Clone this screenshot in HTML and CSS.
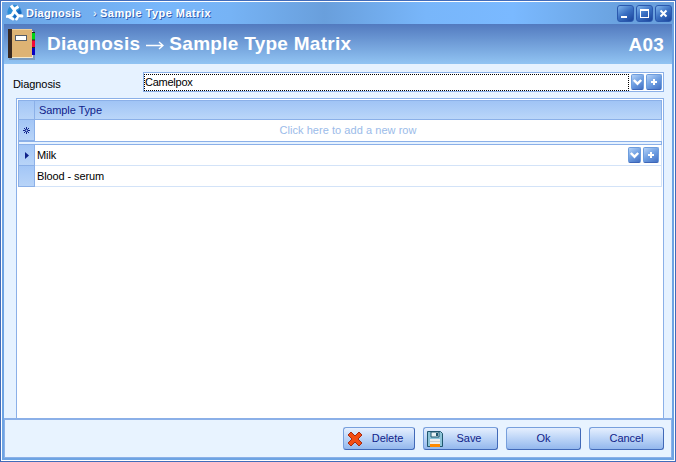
FILE: index.html
```
<!DOCTYPE html>
<html lang="en">
<head>
<meta charset="utf-8">
<title>Diagnosis → Sample Type Matrix</title>
<link rel="stylesheet" href="styles.css">
</head>
<body>
<svg class="defs" width="0" height="0">
  <symbol id="down" viewBox="0 0 11 14"><path d="M1.800 5l3.700 3.700L9.200 5" fill="none" stroke="#fff" stroke-width="2.400"/></symbol>
  <symbol id="plus" viewBox="0 0 14 14"><path d="M4 7h6M7 4v6" fill="none" stroke="#fff" stroke-width="2"/></symbol>
</svg>
<div class="window">
  <div class="frame">
    <div class="titlebar">
      <svg class="app-icon" width="18" height="18" viewBox="0 0 18 18">
        <circle cx="8.500" cy="8" r="7.200" fill="#2e90d8"/>
        <path d="M9 9l5-4 1.500 4-1 3z" fill="#1565bd"/>
        <path d="M5 1.500l3 4 4.500-3M8.500 5v3" fill="none" stroke="#fff" stroke-width="3"/>
        <path d="M8 7.500l-2 3.500-5 1.500M2.500 12.500l4.500 2.500M9 8l3 3.500 4 .5M12 12l-1.500 3" fill="none" stroke="#fff" stroke-width="2.800" stroke-linecap="round"/>
        <path d="M7 12.500l2-2 2 2-2 2z" fill="#1b6cc2"/>
      </svg>
      <span class="title-a">Diagnosis</span><span class="title-sep">›</span><span class="title-b">Sample Type Matrix</span>
      <div class="win-buttons">
        <svg class="win-button" viewBox="0 0 15 15"><path d="M3 10h6v2H3z" fill="#fff"/></svg>
        <svg class="win-button" viewBox="0 0 15 15"><path d="M3 3h9v9H3zM4 5v6h7V5z" fill="#fff" fill-rule="evenodd"/></svg>
        <svg class="win-button" viewBox="0 0 15 15"><path d="M4.500 4.500l6 6M10.500 4.500l-6 6" stroke="#fff" stroke-width="2"/></svg>
      </div>
    </div>
    <div class="banner">
      <svg class="book" width="28" height="31" viewBox="0 0 28 31">
        <rect x="1" y="1" width="26" height="30" fill="#5c6070" opacity=".35"/>
        <path d="M22 2h3v27H22z" fill="#e8e6e0"/>
        <path d="M24 4h3v7h-3z" fill="#00d415"/><path d="M24 11h3v7h-3z" fill="#f20736"/><path d="M24 19h3v7h-3z" fill="#0800c4"/>
        <path d="M24 11h3M24 18.500h3M24 3.500h3" stroke="#222"/>
        <rect x="0" y="0" width="24" height="29" fill="#deb374"/>
        <path d="M4 .5h20" stroke="#f0cf98"/><path d="M4 28.500h20" stroke="#f4e9cc"/>
        <rect x="0" y="0" width="4" height="29" fill="#382820"/>
        <rect x="7.500" y="6.500" width="11" height="5" fill="#fff" stroke="#555c68"/>
      </svg>
      <h1>Diagnosis<svg class="arrow" width="18" height="9" viewBox="0 0 18 9"><path d="M0 4.500h17M13 1l4 3.500L13 8" fill="none" stroke="#fff" stroke-width="1.400"/></svg>Sample Type Matrix</h1>
      <span class="code">A03</span>
    </div>
    <div class="content">
      <div class="field">
        <label>Diagnosis</label>
        <div class="combo">
          <div class="value">Camelpox</div>
          <svg class="mini down"><use href="#down"/></svg><svg class="mini plus"><use href="#plus"/></svg>
        </div>
      </div>
      <div class="grid">
        <div class="row head"><div class="mark"></div><div class="cell">Sample Type</div></div>
        <div class="row new"><div class="mark"><svg width="9" height="9" viewBox="0 0 9 9"><path d="M4.500 1v7M1 4.500h7M2 2l5 5M7 2L2 7" stroke="#10238a"/><circle cx="4.500" cy="4.500" r="1" fill="#a9c9f5"/></svg></div><div class="cell">Click here to add a new row</div></div>
        <div class="split"></div>
        <div class="row"><div class="mark"><svg width="9" height="9" viewBox="0 0 9 9"><path d="M3 1l4 3.500L3 8z" fill="#10238a"/></svg></div><div class="cell">Milk<span class="tools"><svg class="mini down"><use href="#down"/></svg><svg class="mini plus"><use href="#plus"/></svg></span></div></div>
        <div class="row"><div class="mark"></div><div class="cell">Blood - serum</div></div>
      </div>
    </div>
    <div class="footer">
      <button class="btn delete"><svg width="16" height="16" viewBox="0 0 16 16"><path d="M4 1l4 4 4-4 3 3-4 4 4 4-3 3-4-4-4 4-3-3 4-4-4-4z" fill="#f24d13" stroke="#a52a12"/></svg><span>Delete</span></button>
      <button class="btn save"><svg width="16" height="16" viewBox="0 0 16 16"><path d="M.5.5h13l2 2v13H.5z" fill="#8cc4d8" stroke="#20576e"/><path d="M4 1h8v5H4z" fill="#e8f2f4" stroke="#20576e"/><path d="M9 2h2v3H9z" fill="#20576e"/><path d="M3 8h10v7H3z" fill="#eee"/><path d="M3 13h10v3H3z" fill="#ff8a00"/><path d="M3 10.500h10" stroke="#ccc"/></svg><span>Save</span></button>
      <button class="btn ok"><span>Ok</span></button>
      <button class="btn cancel"><span>Cancel</span></button>
    </div>
  </div>
</div>
</body>
</html>
```
FILE: styles.css
```
* { box-sizing: border-box; }
body { margin: 0; font: 11px/13px "Liberation Sans", Arial, sans-serif; color: #000; }
svg { display: block; flex: none; }
.defs { position: absolute; }
.window { width: 676px; height: 462px; padding: 1px; background: #416bb9; }
.frame { height: 460px; border: 1px solid #fff; background: #6da3e3; display: flex; flex-direction: column; padding: 0 2px 2px; }
.titlebar { height: 22px; flex: none; margin: 0 -2px; padding: 0 2px 0 4px; display: flex; align-items: center; color: #fff; font-weight: bold; white-space: pre; text-shadow: 1px 1px 0 #3561af;
  background: linear-gradient(90deg, #6ba5e4 0, #78b7fb 24%, #76b3f5 34%, #699fdc 48%, #78b6fa 63%, #7ab9ff 76%, #6aa2df 92%, #699fdc); }
.app-icon { margin-top: 0; }
.title-a { width: 67px; margin-left: 2px; letter-spacing: .3px; }
.title-sep { width: 7px; font-weight: normal; }
.title-b { letter-spacing: .48px; }
.win-buttons { display: flex; gap: 2px; margin: 0 0 0 auto; }
.win-button { width: 17px; height: 17px; border-radius: 3px; background: linear-gradient(145deg, #7fb5ed 0, #3c72c4 48%, #19439b 100%); border: 1px solid #2b59ae; }
.banner { height: 40px; flex: none; display: flex; align-items: center; padding: 0 8px 0 4px; color: #fff; background: linear-gradient(#527abf, #91c4f3); }
.book { margin-top: 1px; }
h1 { margin: 0 0 0 11px; font-size: 19px; line-height: 24px; white-space: pre; letter-spacing: .28px; }
.arrow { display: inline-block; margin: 0 5px 0 6px; }
.code { margin-left: auto; font-size: 19px; font-weight: bold; letter-spacing: .2px; }
.content { flex: 1; display: flex; flex-direction: column; background: #e6f2ff; padding: 8px 8px 0 9px; }
.field { display: flex; height: 20px; align-items: center; }
.field label { width: 130px; padding-top: 5px; letter-spacing: -.08px; }
.combo { flex: 1; height: 20px; display: flex; align-items: center; padding: 1px; border: 1px solid #8bb0e8; background: #fff; }
.value { flex: 1; height: 17px; border: 1px dotted #000; line-height: 15px; margin-left: -1px; margin-right: 2px; letter-spacing: -.25px; }
.mini { height: 16px; border-radius: 2px; border: 1px solid #6e9ddd; border-bottom-color: #3d66b8; background: linear-gradient(145deg, #b4d2f8, #6f9fe2 50%, #4471c4); }
.mini.down { width: 13px; margin-right: 2px; }
.mini.plus { width: 16px; margin-right: 0; }
.grid { flex: 1; margin: 6px 0 0 3px; border: 1px solid #8bb0e8; border-bottom: 0; padding: 1px; background: #fff; }
.row { display: flex; height: 21px; }
.mark { width: 17px; flex: none; display: flex; align-items: center; justify-content: center; background: linear-gradient(#a3c6f6, #b8d4f8); border: 1px solid #8bb0e8; border-top: 0; }
.cell { flex: 1; display: flex; align-items: center; padding-left: 2px; border: 1px solid #d3e3f8; border-width: 0 1px 1px 0; letter-spacing: -.1px; }
.head { height: 20px; color: #10238a; }
.head .mark { border-top: 1px solid #8bb0e8; }
.head .cell { padding-left: 4px; border: 1px solid #8bb0e8; border-left: 0; background: linear-gradient(#a0c4f5, #bad6f9); }
.new .cell { justify-content: center; padding: 0; color: #9bbbe9; border-bottom: 0; letter-spacing: .05px; }
.split { height: 4px; border: 1px solid #8bb0e8; background: #e6f2ff; }
.tools { display: flex; margin: 0 2px 0 auto; }
.footer { height: 40px; flex: none; display: flex; align-items: flex-start; padding: 7px 7px 0 0; justify-content: flex-end; border: 1px solid #8bb0e8; border-top-width: 2px; background: #e8f3ff; }
.btn { height: 23px; display: flex; align-items: center; justify-content: center; padding: 0; margin: 0 0 0 8px; border: 1px solid #779fdc; border-right-color: #4169b8; border-bottom-color: #4169b8; border-radius: 3px; color: #10238a; font: inherit; letter-spacing: -.05px; background: linear-gradient(#e5effe, #bdd5f7 48%, #94b8ed); }
.btn svg { margin-left: 3px; }
.btn svg + span { flex: 1; text-align: center; padding-right: 2px; }
.delete { width: 72px; }
.save, .ok, .cancel { width: 75px; }
```
